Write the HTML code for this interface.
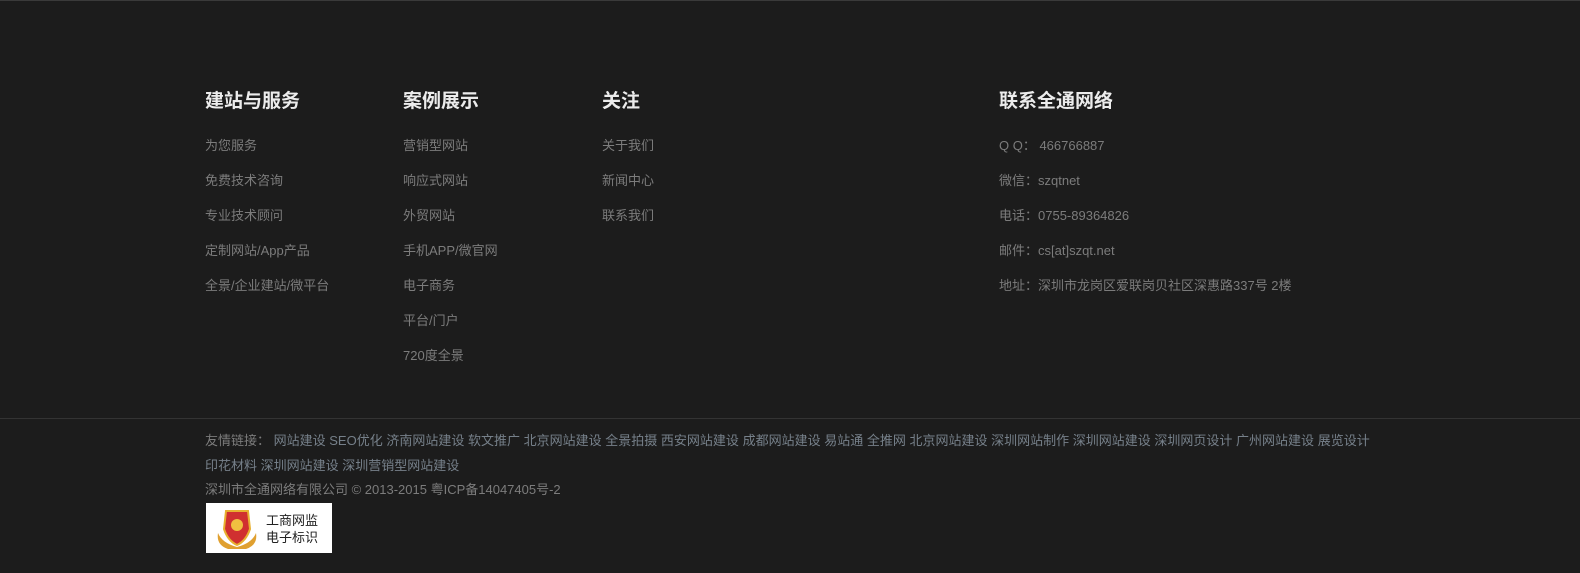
<!DOCTYPE html>
<html><head><meta charset="utf-8"><style>
html,body{margin:0;padding:0}
body{width:1580px;height:573px;background:#1c1c1c;font-family:"Liberation Sans","Noto Sans CJK SC",sans-serif;overflow:hidden;position:relative;border-top:1px solid #3a3a3a;box-sizing:border-box}
.col{position:absolute;top:88px}
.col h3{margin:0;font-size:19px;font-weight:bold;color:#ececec;line-height:26px;height:26px}
.col ul{list-style:none;margin:13px 0 0;padding:0}
.col li{font-size:13px;color:#7c7c7c;line-height:35px;height:35px;white-space:nowrap}
.sep{position:absolute;top:417px;left:0;width:1580px;height:1px;background:#333}
.bot{position:absolute;left:205px;top:428px;font-size:13px;line-height:24.5px;color:#7c7c7c;width:1170px}
.bot a{color:#76808a;text-decoration:none}
.badge{position:absolute;left:206px;top:502px;width:126px;height:50px;background:#fff}
.badge .t{position:absolute;left:60px;top:9px;font-size:13px;line-height:17px;color:#222}
</style></head><body>
<div class="col" style="left:205px"><h3>建站与服务</h3><ul><li>为您服务</li><li>免费技术咨询</li><li>专业技术顾问</li><li>定制网站/App产品</li><li>全景/企业建站/微平台</li></ul></div>
<div class="col" style="left:403px"><h3>案例展示</h3><ul><li>营销型网站</li><li>响应式网站</li><li>外贸网站</li><li>手机APP/微官网</li><li>电子商务</li><li>平台/门户</li><li>720度全景</li></ul></div>
<div class="col" style="left:602px"><h3>关注</h3><ul><li>关于我们</li><li>新闻中心</li><li>联系我们</li></ul></div>
<div class="col" style="left:999px"><h3>联系全通网络</h3><ul><li>Q Q： 466766887</li><li>微信：szqtnet</li><li>电话：0755-89364826</li><li>邮件：cs[at]szqt.net</li><li>地址：深圳市龙岗区爱联岗贝社区深惠路337号 2楼</li></ul></div>
<div class="sep"></div>
<div class="bot">友情链接： <a>网站建设</a> <a>SEO优化</a> <a>济南网站建设</a> <a>软文推广</a> <a>北京网站建设</a> <a>全景拍摄</a> <a>西安网站建设</a> <a>成都网站建设</a> <a>易站通</a> <a>全推网</a> <a>北京网站建设</a> <a>深圳网站制作</a> <a>深圳网站建设</a> <a>深圳网页设计</a> <a>广州网站建设</a> <a>展览设计</a> <a>印花材料</a> <a>深圳网站建设</a> <a>深圳营销型网站建设</a><br>深圳市全通网络有限公司 © 2013-2015 粤ICP备14047405号-2</div>
<div class="badge">
<svg width="50" height="50" style="position:absolute;left:6px;top:0" viewBox="0 0 50 50">
<path d="M6 30 Q4 42 16 46 L34 46 Q46 42 44 30 Q40 40 25 44 Q10 40 6 30Z" fill="#e0a030"/>
<path d="M14 8 L36 8 L38 26 Q34 38 25 42 Q16 38 12 26Z" fill="#d03030" stroke="#e8b030" stroke-width="2"/>
<circle cx="25" cy="22" r="6" fill="#f0c040"/>
</svg>
<div class="t">工商网监<br>电子标识</div></div>
</body></html>
